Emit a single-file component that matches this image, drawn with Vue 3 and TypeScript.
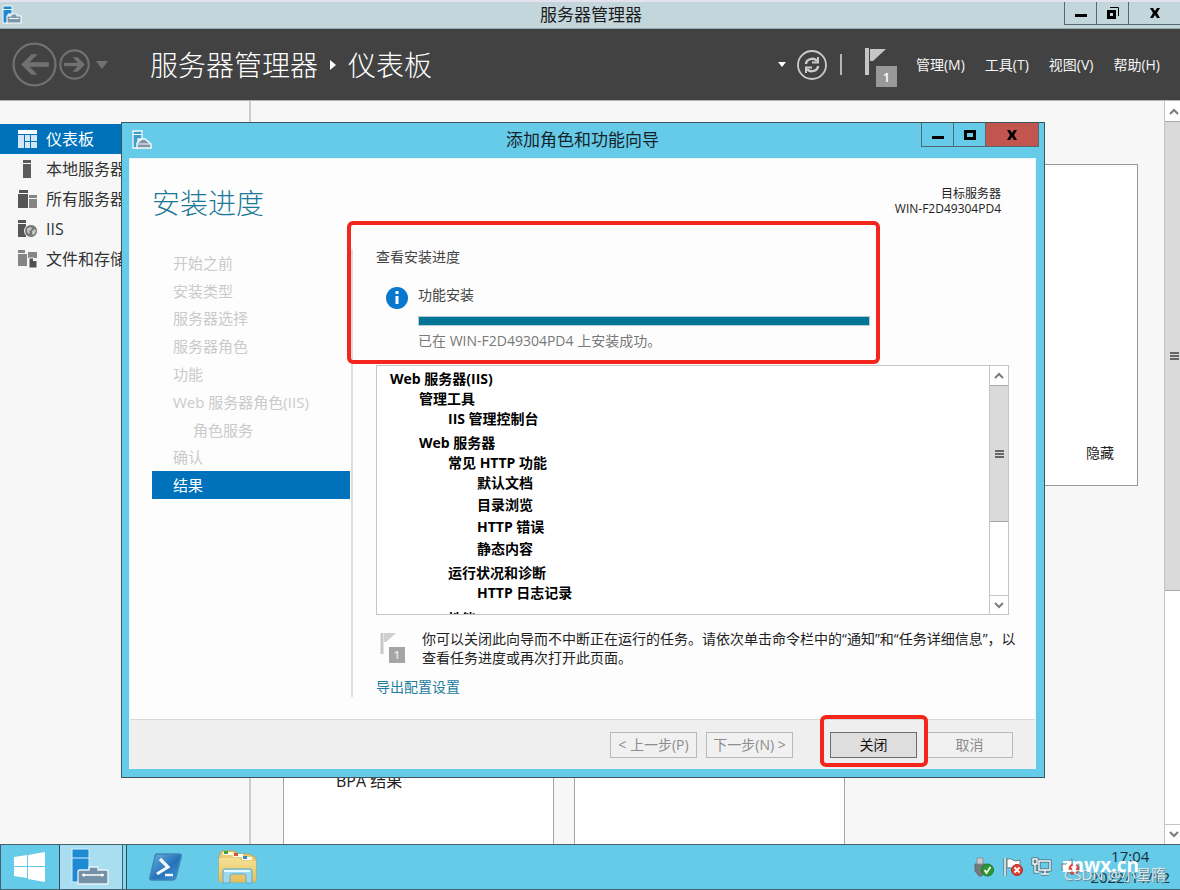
<script setup lang="ts">
interface NavItem { label: string; icon: string; active?: boolean }
interface Step { label: string; sub?: boolean; current?: boolean }
interface TreeRow { label: string; level: number; gap?: string }

const navItems: NavItem[] = [
  { label: '仪表板', icon: 'dashboard', active: true },
  { label: '本地服务器', icon: 'local' },
  { label: '所有服务器', icon: 'all' },
  { label: 'IIS', icon: 'iis' },
  { label: '文件和存储服务', icon: 'files' },
]

const menus: string[] = ['管理(M)', '工具(T)', '视图(V)', '帮助(H)']

const steps: Step[] = [
  { label: '开始之前' },
  { label: '安装类型' },
  { label: '服务器选择' },
  { label: '服务器角色' },
  { label: '功能' },
  { label: 'Web 服务器角色(IIS)' },
  { label: '角色服务', sub: true },
  { label: '确认' },
  { label: '结果', current: true },
]

const tree: TreeRow[] = [
  { label: 'Web 服务器(IIS)', level: 0 },
  { label: '管理工具', level: 1 },
  { label: 'IIS 管理控制台', level: 2 },
  { label: 'Web 服务器', level: 1, gap: 'wide' },
  { label: '常见 HTTP 功能', level: 2 },
  { label: '默认文档', level: 3 },
  { label: '目录浏览', level: 3, gap: 'mid' },
  { label: 'HTTP 错误', level: 3, gap: 'mid' },
  { label: '静态内容', level: 3, gap: 'mid' },
  { label: '运行状况和诊断', level: 2, gap: 'wide' },
  { label: 'HTTP 日志记录', level: 3 },
  { label: '性能', level: 2, gap: 'widest' },
]
</script>

<template>
  <div class="desktop">
    <header class="app-title">
      <svg class="app-icon" viewBox="0 0 20 20" aria-hidden="true">
        <path d="M1 1h9v8H6v9H1z" fill="#1e88d2" stroke="#f4fafc" stroke-width="1" />
        <path d="M1 4.500h9" stroke="#f4fafc" />
        <path d="M5 11h4V9h6v2h4v7H5z" fill="#7e98ab" stroke="#f4fafc" stroke-width="1.200" />
        <path d="M7 13.500h10" stroke="#f4fafc" />
      </svg>
      <h1>服务器管理器</h1>
      <div class="win-controls">
        <button type="button" aria-label="最小化"><svg viewBox="0 0 14 14"><path d="M1 8h12v3H1z" /></svg></button>
        <button type="button" aria-label="还原"><svg viewBox="0 0 14 14"><path d="M1 4h9v9H1zM4 7v3h3V7z" fill-rule="evenodd" /><path d="M4 1.500h8.500V10" fill="none" stroke="#000" /></svg></button>
        <button type="button" class="wide" aria-label="关闭"><svg viewBox="0 0 14 14"><path d="M2 2h3l2 3 2-3h3L9 7l3 5H9L7 9l-2 3H2l3-5z" /></svg></button>
      </div>
    </header>

    <div class="command-bar">
      <button type="button" class="plain back" aria-label="后退">
        <svg viewBox="0 0 44 44"><circle cx="22" cy="22" r="20.500" fill="none" stroke="#717171" stroke-width="2.200" /><path d="M36 22H11M19 12h6L15 22l10 10h-6L9 22z" fill="#717171" stroke="none" /><path d="M36 22H12" stroke="#717171" stroke-width="4.500" /></svg>
      </button>
      <button type="button" class="plain forward" aria-label="前进">
        <svg viewBox="0 0 30 30"><circle cx="15" cy="15" r="13.700" fill="none" stroke="#717171" stroke-width="2" /><path d="M5 15h17" stroke="#717171" stroke-width="3.200" /><path d="M13 8h5l7 7-7 7h-5l7-7z" fill="#717171" /></svg>
      </button>
      <button type="button" class="plain history" aria-label="历史记录"><svg viewBox="0 0 12 8"><path d="M0 0h12L6 8z" fill="#717171" /></svg></button>
      <nav class="crumbs" aria-label="位置">
        <span>服务器管理器</span>
        <svg viewBox="0 0 6 10" aria-hidden="true"><path d="M0 0l6 5-6 5z" fill="#fff" /></svg>
        <span>仪表板</span>
      </nav>
      <button type="button" class="plain drop" aria-label="更多"><svg viewBox="0 0 8 5"><path d="M0 0h8L4 5z" fill="#fff" /></svg></button>
      <button type="button" class="plain refresh" aria-label="刷新">
        <svg viewBox="0 0 30 30" fill="none" stroke="#cbcbcb"><circle cx="15" cy="15" r="14" stroke-width="1.800" /><path d="M9 14c0-5 8-7 11-3M21 16c0 5-8 7-11 3" stroke-width="2.400" /><path d="M21 7v5.500h-6M9 23v-5.500h6" stroke-width="2" /></svg>
      </button>
      <span class="separator"></span>
      <button type="button" class="plain notice" aria-label="通知 1">
        <svg viewBox="0 0 34 40" aria-hidden="true"><path d="M2 1v27" stroke="#c6c6c6" stroke-width="4" /><path d="M5 2h16L8 14H5z" fill="#c6c6c6" /></svg>
        <span class="badge">1</span>
      </button>
      <div class="menus"><button v-for="menu in menus" :key="menu" type="button" class="plain">{{ menu }}</button></div>
    </div>

    <div class="workspace">
      <nav class="sidebar" aria-label="服务器管理器导航">
        <a v-for="item in navItems" :key="item.label" href="#" :class="{ active: item.active }">
          <svg viewBox="0 0 20 20" aria-hidden="true">
            <template v-if="item.icon === 'dashboard'">
              <path d="M0 1h19v4H0z" fill="#fff" /><path d="M0 6h6v13H0zM7 6h5v6H7zM13 6h6v6h-6zM7 13h5v6H7zM13 13h6v6h-6z" fill="#d4e6f5" />
            </template>
            <template v-else-if="item.icon === 'local'"><path d="M5 1h8v3H5zM5 5h8v14H5z" fill="#5c5c5c" /></template>
            <template v-else-if="item.icon === 'all'">
              <path d="M1 1h9v3H1zM0 5h10v14H0z" fill="#555" /><path d="M11 6h8v3h-8zM11 10h8v9h-8z" fill="#858585" />
            </template>
            <template v-else-if="item.icon === 'iis'">
              <path d="M0 1h8v3H0zM0 5h8v13H0z" fill="#555" /><circle cx="13" cy="12" r="6.500" fill="#777" stroke="#f7f7f7" /><path d="M9 10l3-2 2 1-1 2-2 1 1 2-1 1-2-2zM14 12l3-2 1 2-2 4-2-1z" fill="#c4c4c4" />
            </template>
            <template v-else>
              <path d="M0 1h7v3H0zM0 5h9v12H0zM10 3h9v6h-9z" fill="#858585" /><path d="M11 9h5l3 3v7h-8z" fill="#505050" stroke="#f7f7f7" /><path d="M15 9v3h4" fill="#fff" />
            </template>
          </svg>
          <span>{{ item.label }}</span>
        </a>
      </nav>
      <main class="dashboard">
        <section class="welcome"><button type="button" class="plain">隐藏</button></section>
        <div class="cards">
          <section class="card"><p>BPA 结果</p></section>
          <section class="card"></section>
        </div>
      </main>
      <div class="scrollbar page-scroll" aria-hidden="true">
        <span class="scroll-end"><svg viewBox="0 0 10 7"><path d="M1 6l4-4 4 4" /></svg></span>
        <span class="thumb"><i></i></span>
        <span class="scroll-end"><svg viewBox="0 0 10 7"><path d="M1 1l4 4 4-4" /></svg></span>
      </div>
    </div>

    <footer class="taskbar">
      <button type="button" class="plain start" aria-label="开始">
        <svg viewBox="0 0 32 30"><path d="M0 5l13-2v11H0zM14 3l17-3v14H14zM0 15h13v11L0 24zM14 15h17v15l-17-3z" fill="#fff" /></svg>
      </button>
      <button type="button" class="plain running" aria-label="服务器管理器">
        <svg viewBox="0 0 38 38"><path d="M1 1h17v33H1z" fill="#1e8ad3" stroke="#d7effa" /><path d="M1 10h17" stroke="#d7effa" /><path d="M18 22v-3h9v3h8q2 0 2 2v12H7V24q0-2 2-2z" fill="#7491a7" stroke="#e8f4fa" stroke-width="1.300" /><path d="M11 27h22" stroke="#fff" stroke-width="1.500" /><circle cx="13" cy="27" r="1.500" fill="#fff" /><circle cx="31" cy="27" r="1.500" fill="#fff" /></svg>
      </button>
      <button type="button" class="plain pinned" aria-label="PowerShell">
        <svg viewBox="0 0 34 28">
          <defs><linearGradient id="ps" x1="0" y1="0" x2="1" y2="1"><stop offset="0" stop-color="#6db4e4" /><stop offset="0.550" stop-color="#2672b8" /><stop offset="1" stop-color="#3f96d9" /></linearGradient></defs>
          <path d="M8 1h22q3 0 2 3l-5 20q-1 3-4 3H3q-3 0-2-3L6 4q0-3 2-3z" fill="url(#ps)" stroke="#3e86b5" stroke-width="1.500" />
          <path d="M11 6l8 8-11 7" fill="none" stroke="#f2f8fc" stroke-width="3.200" /><path d="M16 22h8" stroke="#f2f8fc" stroke-width="2.500" />
        </svg>
      </button>
      <button type="button" class="plain pinned explorer" aria-label="文件资源管理器">
        <svg viewBox="0 0 40 34">
          <defs><linearGradient id="folder" x1="0" y1="0" x2="0" y2="1"><stop offset="0" stop-color="#f5e296" /><stop offset="1" stop-color="#e5bd58" /></linearGradient></defs>
          <path d="M3 2q0-1 1-1h13l2 3h12l7 4v22q0 2-2 2H3q-2 0-2-2V6z" fill="#e9cd78" stroke="#c6a551" />
          <path d="M5 2h10v3H5zM15 4h10v3H15zM24 7h10v3H24z" fill="#fffdf0" /><path d="M6 1h4v3H6z" fill="#3aa637" /><path d="M16 3h4v3h-4z" fill="#cf5731" /><path d="M25 6h4v3h-4z" fill="#2c8dcc" />
          <path d="M1 8h20l3 3h14v19q0 2-2 2H3q-2 0-2-2z" fill="url(#folder)" />
          <path d="M5 33V20q0-1 2-1h25q2 0 2 2v12h-6v-7q0-2-2-2H14q-2 0-2 2v7z" fill="#9ed8ee" stroke="#5faacd" /><path d="M6 21h26" stroke="#e5fbff" stroke-width="2" />
        </svg>
      </button>
      <div class="tray">
        <svg viewBox="0 0 22 20" aria-hidden="true"><path d="M2 7h10v7l-3 5H6l-4-5z" fill="#74797c" stroke="#646c70" /><path d="M4 1h6v6H4z" fill="#c9cdcf" stroke="#899196" /><circle cx="14.500" cy="13" r="6" fill="#2d9832" stroke="#1d7a25" /><path d="M11.500 13l2 3 4-6" fill="none" stroke="#fff" stroke-width="1.700" /></svg>
        <svg viewBox="0 0 22 20" aria-hidden="true"><path d="M3 1v18" stroke="#55656c" stroke-width="3" /><path d="M3 1v18" stroke="#fff" stroke-width="1.500" /><path d="M5 2q4-1 6 1t7 0v9q-4 2-7 0t-6-1z" fill="#fff" stroke="#687c84" /><circle cx="15" cy="13" r="5.500" fill="#df4237" stroke="#b72b25" /><path d="M12.500 10.500l5 5m0-5l-5 5" stroke="#fff" stroke-width="1.800" /></svg>
        <svg viewBox="0 0 22 20" aria-hidden="true" fill="none"><g stroke="#47616d" stroke-width="3"><path d="M8 4h11v9H8zM10 17h8M14 13v4M2 2h4v5H2zM4 7v8h4" /></g><g stroke="#fff" stroke-width="1.400"><path d="M8 4h11v9H8zM10 17h8M14 13v4M2 2h4v5H2zM4 7v8h4" /></g></svg>
        <svg viewBox="0 0 22 20" aria-hidden="true"><path d="M2 7h4l6-5v16l-6-5H2z" fill="#fff" stroke="#62747c" /><circle cx="14" cy="12" r="5.500" fill="#df4237" /><path d="M11.500 9.500l5 5m0-5l-5 5" stroke="#fff" stroke-width="1.800" /></svg>
      </div>
      <div class="clock"><time>17:04</time><time>2022/11/12</time></div>
      <span class="credit">CSDN @小星隋</span>
      <span class="site">znwx.cn</span>
    </footer>

    <section class="dialog" role="dialog" aria-labelledby="wizard-title">
      <header class="dialog-title">
        <svg class="app-icon" viewBox="0 0 20 20" aria-hidden="true">
          <path d="M1 1h9v8H6v9H1z" fill="#3f9fc6" stroke="#f4fafc" stroke-width="1.300" /><path d="M1 4.500h9" stroke="#f4fafc" />
          <path d="M5 18v-5l5-4h3l6 5v4z" fill="#8194a9" stroke="#f4fafc" stroke-width="1.500" /><path d="M6 14h12" stroke="#f4fafc" />
        </svg>
        <h2 id="wizard-title">添加角色和功能向导</h2>
        <div class="win-controls">
          <button type="button" aria-label="最小化"><svg viewBox="0 0 14 14"><path d="M1 8h12v3H1z" /></svg></button>
          <button type="button" aria-label="最大化"><svg viewBox="0 0 14 14"><path d="M1 2h12v10H1zM4 5v4h6V5z" fill-rule="evenodd" /></svg></button>
          <button type="button" class="wide danger" aria-label="关闭"><svg viewBox="0 0 14 14"><path d="M2 2h3l2 3 2-3h3L9 7l3 5H9L7 9l-2 3H2l3-5z" /></svg></button>
        </div>
      </header>

      <div class="dialog-body">
        <div class="heading">
          <h3>安装进度</h3>
          <p>目标服务器<br>WIN-F2D49304PD4</p>
        </div>
        <div class="wizard">
          <div class="step-pane">
            <ol class="steps">
              <li v-for="step in steps" :key="step.label" :class="{ sub: step.sub, current: step.current }">{{ step.label }}</li>
            </ol>
          </div>
          <div class="content">
            <div class="progress-area">
              <p class="label">查看安装进度</p>
              <div class="task">
                <svg viewBox="0 0 22 22" aria-hidden="true"><circle cx="11" cy="11" r="11" fill="#0878cf" /><path d="M9.500 4h3v3h-3zM9.500 9h3v8h-3z" fill="#fff" /></svg>
                <div>
                  <p id="task-name">功能安装</p>
                  <div class="bar" role="progressbar" aria-labelledby="task-name" aria-valuenow="100"></div>
                  <p class="message">已在 WIN-F2D49304PD4 上安装成功。</p>
                </div>
              </div>
              <span class="mark mark-progress"></span>
            </div>
            <div class="listbox">
              <ul>
                <li v-for="row in tree" :key="row.label" :class="['level-' + row.level, row.gap]">{{ row.label }}</li>
              </ul>
              <div class="scrollbar" aria-hidden="true">
                <span class="scroll-end"><svg viewBox="0 0 10 7"><path d="M1 6l4-4 4 4" /></svg></span>
                <span class="thumb"><i></i></span>
                <span class="scroll-end"><svg viewBox="0 0 10 7"><path d="M1 1l4 4 4-4" /></svg></span>
              </div>
            </div>
            <div class="note">
              <div class="note-flag">
                <svg viewBox="0 0 26 30" aria-hidden="true"><path d="M2 1v21" stroke="#c8c8c8" stroke-width="3" /><path d="M4 1h12L6 10H4z" fill="#d0d0d0" /></svg>
                <span class="badge">1</span>
              </div>
              <p>你可以关闭此向导而不中断正在运行的任务。请依次单击命令栏中的“通知”和“任务详细信息”，以<br>查看任务进度或再次打开此页面。</p>
            </div>
            <a class="export" href="#">导出配置设置</a>
          </div>
        </div>
        <footer class="actions">
          <button type="button" disabled>&lt; 上一步(P)</button>
          <button type="button" disabled>下一步(N) &gt;</button>
          <div class="close-wrap">
            <button type="button" class="primary">关闭</button>
            <span class="mark mark-close"></span>
          </div>
          <button type="button" disabled>取消</button>
        </footer>
      </div>
    </section>
  </div>
</template>

<style>
body { margin: 0; }
</style>

<style scoped>
* { box-sizing: border-box; }
h1, h2, h3, p, ul, ol { margin: 0; padding: 0; font-weight: 400; list-style: none; }
svg { display: block; flex: none; }
button { font: inherit; color: inherit; padding: 0; margin: 0; border-radius: 0; white-space: nowrap; }
a { text-decoration: none; }
.plain { background: none; border: 0; }

.desktop {
  position: relative;
  display: flex;
  flex-direction: column;
  height: 100vh;
  min-height: 800px;
  overflow: hidden;
  background: #f7f7f7;
  color: #222;
  font: 14px/20px "Open Sans", "Noto Sans CJK SC", sans-serif;
}

.app-title {
  display: grid;
  grid-template-columns: 1fr auto 1fr;
  height: 29px;
  padding-left: 2px;
  background: #c2d6dc;
  border-top: 2px solid #e3e2ee;
  border-bottom: 1px solid #93a9af;
}
.app-title h1 { font-size: 17px; line-height: 26px; color: #1c1c1c; }
.app-icon { width: 20px; height: 20px; margin-top: 3px; }
.win-controls { display: flex; justify-self: end; height: 24px; }
.win-controls button {
  display: grid;
  place-items: center;
  width: 32px;
  background: none;
  border: 1px solid #51696f;
  border-width: 0 0 1px 1px;
}
.win-controls .wide { width: 52px; }
.win-controls svg { width: 14px; height: 14px; }
.app-title .win-controls { height: 23px; }

.command-bar {
  display: flex;
  align-items: center;
  height: 72px;
  padding: 0 20px 0 12px;
  background: #424242;
  border-bottom: 1px solid #b5b5b5;
  color: #f5f5f5;
}
.back svg { width: 45px; height: 45px; }
.forward svg { width: 31px; height: 31px; margin-left: 2px; }
.history svg { width: 12px; height: 8px; margin-left: 6px; }
.crumbs {
  display: flex;
  align-items: center;
  gap: 12px;
  margin: 0 auto 0 42px;
  font-size: 28px;
  font-weight: 300;
  line-height: 40px;
  color: #fff;
}
.crumbs svg { width: 6px; height: 10px; }
.drop svg { width: 8px; height: 5px; }
.refresh svg { width: 30px; height: 30px; margin-left: 11px; }
.separator { width: 2px; height: 21px; margin: 0 23px 0 13px; background: #b5b5b5; }
.notice { position: relative; width: 34px; height: 40px; margin-top: 5px; }
.notice svg { width: 34px; height: 40px; }
.badge { position: absolute; right: 2px; bottom: 0; display: grid; place-items: center; background: #999; color: #fff; font-weight: 600; }
.notice .badge { width: 21px; height: 21px; font-size: 13px; }
.menus { display: flex; gap: 20px; margin-left: 17px; }

.workspace { display: flex; flex: 1; min-height: 0; }
.sidebar { width: 251px; padding-top: 23px; border-right: 2px solid #cdcdcd; }
.sidebar a { display: flex; align-items: center; gap: 8px; height: 30px; padding-left: 18px; font-size: 16px; color: #333; }
.sidebar a.active { background: #0072bc; color: #fff; }
.sidebar svg { width: 20px; height: 20px; }
.dashboard { display: flex; flex: 1; flex-direction: column; padding: 63px 26px 0 32px; }
.welcome { display: flex; align-items: flex-end; justify-content: flex-end; height: 322px; padding: 0 23px 22px; background: #fff; border: 1px solid #979797; }
.cards { display: grid; flex: 1; grid-template-columns: 271px 271px; gap: 20px; margin-top: 76px; }
.card { display: flex; align-items: flex-end; padding: 0 52px 53px; background: #fff; border: 1px solid #a5a5a5; border-bottom: 0; font-size: 16px; }

.scrollbar { display: flex; flex-direction: column; width: 20px; border-left: 1px solid #c4c4c4; border-right: 1px solid #c4c4c4; background: #fff; }
.scrollbar svg { width: 10px; height: 7px; fill: none; stroke: #7c7c7c; stroke-width: 2; }
.scroll-end { display: grid; place-items: center; height: 19px; background: #fff; }
.scroll-end:last-child { margin-top: auto; border-top: 1px solid #c4c4c4; }
.thumb { display: grid; place-items: center; height: 137px; background: #dadada; border: 1px solid #a9a9a9; border-width: 1px 0; }
.thumb i { width: 9px; height: 8px; border: 2px solid #666; border-width: 2px 0; background: linear-gradient(#dadada 1px, #666 1px, #666 3px, #dadada 3px); }
.page-scroll { width: 16px; border-right: 0; }
.page-scroll .scroll-end { height: 20px; padding-left: 3px; }
.page-scroll .thumb { height: 470px; padding-left: 4px; }

.taskbar { position: relative; display: flex; align-items: center; height: 46px; padding-right: 10px; background: #66cbe9; border: 1px solid #44616c; border-right: 0; }
.start { display: grid; place-items: center; width: 58px; }
.start svg { width: 32px; height: 30px; }
.running { display: grid; align-self: stretch; width: 68px; padding-left: 11px; align-content: center; background: linear-gradient(90deg, #a8def0 62px, #41616c 62px, #41616c 63px, #8cd6ed 63px); border: 1px solid #2d4e5b; border-width: 0 1px; }
.running svg { width: 38px; height: 38px; }
.pinned { margin-left: 22px; }
.pinned svg { width: 34px; height: 28px; }
.explorer { margin-left: 35px; }
.explorer svg { width: 40px; height: 34px; }
.tray { display: flex; gap: 7px; margin-left: auto; }
.tray svg { width: 22px; height: 20px; }
.clock { display: flex; flex-direction: column; align-items: center; margin-left: 8px; font-size: 15px; line-height: 21px; color: #16303a; }
.site { position: absolute; right: 41px; top: 7px; color: #fff; font-size: 19px; font-weight: 700; line-height: 26px; }
.credit { position: absolute; right: 14px; top: 18px; color: #d7e6ec; font-size: 15px; line-height: 22px; text-shadow: 1px 1px 1px #6f8790; }

.dialog { position: absolute; top: 122px; left: 121px; right: 135px; background: #66cbe8; border: 1px solid #3f555c; }
.dialog-title { display: grid; grid-template-columns: 1fr auto 1fr; height: 35px; padding: 0 5px 0 10px; }
.dialog-title h2 { padding-right: 6px; font-size: 17px; line-height: 34px; color: #16242a; }
.dialog-title .app-icon { margin-top: 7px; }
.dialog-title .danger { background: #c2554d; border-right-width: 1px; width: 54px; }
.dialog-body { margin: 0 8px 8px 7px; background: #fdfdfd; border: 1px solid #e9f4f7; border-bottom: 0; }
.heading { display: flex; justify-content: space-between; height: 90px; padding: 24px 34px 0 22px; }
.heading h3 { font-size: 28px; font-weight: 300; line-height: 40px; color: #1b7896; }
.heading p { padding-top: 3px; font-size: 12px; line-height: 15px; text-align: right; color: #222; }
.wizard { display: flex; height: 448px; padding: 0 22px; }
.step-pane { width: 201px; flex: none; padding-right: 1px; border-right: 2px solid #dedede; }
.steps { display: grid; grid-auto-rows: 1fr; height: 250px; font-size: 15px; color: #cacaca; }
.steps li { display: flex; align-items: center; padding-left: 21px; }
.steps .sub { padding-left: 41px; }
.steps .current { background: #0072bc; color: #fff; }
.content { flex: 1; min-width: 0; padding-left: 23px; }
.progress-area { position: relative; height: 116px; color: #444; }
.progress-area .label { line-height: 16px; }
.task { display: grid; grid-template-columns: 22px 1fr; gap: 10px; padding: 20px 143px 0 10px; }
.task svg { width: 22px; height: 22px; margin-top: 2px; }
.bar { height: 10px; margin: 11px 0 5px; background: #007596; border: 1px solid #b5cdd3; }
.message { color: #787878; }
.mark { position: absolute; border: 4px solid #f4251b; border-radius: 6px; pointer-events: none; }
.mark-progress { left: -29px; right: 133px; top: -28px; height: 143px; }
.listbox { display: flex; height: 250px; margin-right: 4px; overflow: hidden; background: #fff; border: 1px solid #c5c5c5; border-right: 0; }
.listbox ul { flex: 1; padding: 3px 13px; color: #000; font-weight: 700; }
.listbox li { line-height: 20px; }
.listbox .mid { margin-top: 2px; }
.listbox .wide { margin-top: 4px; }
.listbox .widest { margin-top: 6px; }
.level-1 { padding-left: 29px; }
.level-2 { padding-left: 58px; }
.level-3 { padding-left: 87px; }
.note { display: flex; margin-top: 14px; white-space: nowrap; line-height: 19px; }
.note-flag { position: relative; flex: none; width: 46px; height: 34px; }
.note-flag svg { width: 26px; height: 30px; margin: 3px 0 0 4px; }
.note-flag .badge { right: 17px; width: 16px; height: 16px; background: #a5a5a5; color: #eee; font-size: 11px; line-height: 16px; }
.export { display: inline-block; margin-top: 10px; color: #1b7d9d; }
.actions { display: flex; justify-content: flex-end; gap: 9px; height: 50px; margin-top: 22px; padding: 12px 22px 0; background: #efefef; border-top: 1px solid #d8d8d8; }
.actions button { width: 87px; height: 26px; background: #f1f1f1; border: 1px solid #b9b9b9; color: #8c8c8c; line-height: 24px; }
.close-wrap { position: relative; margin-left: 28px; height: 26px; }
.actions .primary { display: block; background: #dedede; border-color: #6d6d6d; color: #111; }
.mark-close { left: -10px; right: -11px; top: -17px; height: 52px; }
</style>
